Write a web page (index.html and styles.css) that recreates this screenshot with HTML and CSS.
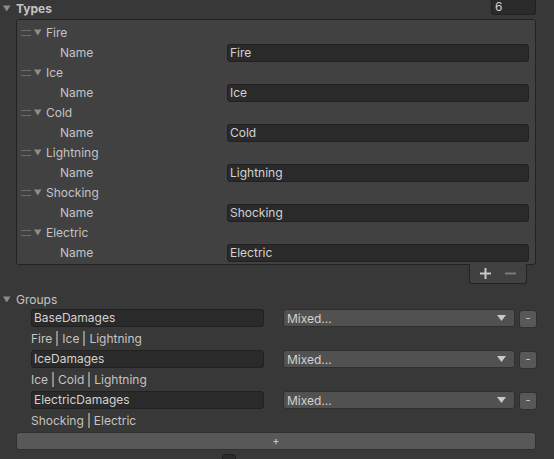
FILE: index.html
```html
<!DOCTYPE html>
<html>
<head>
<meta charset="utf-8">
<link rel="stylesheet" href="styles.css">
</head>
<body>
<div class="inspector">
  <div class="foldout-row">
    <svg class="fold" width="8" height="8" viewBox="0 0 8 8"><path d="M0 1.5h7.5L3.75 7.5z"/></svg>
    <span class="bold">Types</span>
    <div class="count">6</div>
  </div>
  <div class="list">
    <div class="el">
      <div class="el-head"><span class="handle"></span><svg class="fold" width="8" height="8" viewBox="0 0 8 8"><path d="M0 1.5h7.5L3.75 7.5z"/></svg><span>Fire</span></div>
      <div class="el-prop"><span class="prop-label">Name</span><div class="field">Fire</div></div>
    </div>
    <div class="el">
      <div class="el-head"><span class="handle"></span><svg class="fold" width="8" height="8" viewBox="0 0 8 8"><path d="M0 1.5h7.5L3.75 7.5z"/></svg><span>Ice</span></div>
      <div class="el-prop"><span class="prop-label">Name</span><div class="field">Ice</div></div>
    </div>
    <div class="el">
      <div class="el-head"><span class="handle"></span><svg class="fold" width="8" height="8" viewBox="0 0 8 8"><path d="M0 1.5h7.5L3.75 7.5z"/></svg><span>Cold</span></div>
      <div class="el-prop"><span class="prop-label">Name</span><div class="field">Cold</div></div>
    </div>
    <div class="el">
      <div class="el-head"><span class="handle"></span><svg class="fold" width="8" height="8" viewBox="0 0 8 8"><path d="M0 1.5h7.5L3.75 7.5z"/></svg><span>Lightning</span></div>
      <div class="el-prop"><span class="prop-label">Name</span><div class="field">Lightning</div></div>
    </div>
    <div class="el">
      <div class="el-head"><span class="handle"></span><svg class="fold" width="8" height="8" viewBox="0 0 8 8"><path d="M0 1.5h7.5L3.75 7.5z"/></svg><span>Shocking</span></div>
      <div class="el-prop"><span class="prop-label">Name</span><div class="field">Shocking</div></div>
    </div>
    <div class="el">
      <div class="el-head"><span class="handle"></span><svg class="fold" width="8" height="8" viewBox="0 0 8 8"><path d="M0 1.5h7.5L3.75 7.5z"/></svg><span>Electric</span></div>
      <div class="el-prop"><span class="prop-label">Name</span><div class="field">Electric</div></div>
    </div>
  </div>
  <div class="footer-wrap">
    <div class="list-footer">
      <svg class="plus" width="11" height="11" viewBox="0 0 11 11"><path d="M4.5 0h2v4.5H11v2H6.5V11h-2V6.5H0v-2h4.5z"/></svg>
      <svg class="minus" width="11" height="11" viewBox="0 0 11 11"><path d="M0 4.5h11v2H0z"/></svg>
    </div>
  </div>

  <div class="foldout-row groups-head">
    <svg class="fold" width="8" height="8" viewBox="0 0 8 8"><path d="M0 1.5h7.5L3.75 7.5z"/></svg>
    <span>Groups</span>
  </div>

  <div class="group">
    <div class="group-row">
      <div class="field gfield">BaseDamages</div>
      <div class="dropdown"><span>Mixed...</span><svg width="9" height="6" viewBox="0 0 9 6"><path d="M0 0h9L4.5 6z"/></svg></div>
      <div class="small-btn">-</div>
    </div>
    <div class="group-label">Fire<i class="sep"></i>Ice<i class="sep"></i>Lightning</div>
  </div>
  <div class="group">
    <div class="group-row">
      <div class="field gfield">IceDamages</div>
      <div class="dropdown"><span>Mixed...</span><svg width="9" height="6" viewBox="0 0 9 6"><path d="M0 0h9L4.5 6z"/></svg></div>
      <div class="small-btn">-</div>
    </div>
    <div class="group-label">Ice<i class="sep"></i>Cold<i class="sep"></i>Lightning</div>
  </div>
  <div class="group">
    <div class="group-row">
      <div class="field gfield">ElectricDamages</div>
      <div class="dropdown"><span>Mixed...</span><svg width="9" height="6" viewBox="0 0 9 6"><path d="M0 0h9L4.5 6z"/></svg></div>
      <div class="small-btn">-</div>
    </div>
    <div class="group-label">Shocking<i class="sep"></i>Electric</div>
  </div>

  <div class="add-btn">+</div>

  <div class="bottom-row">
    <span class="bottom-label">Separate Colors</span>
    <div class="toggle"></div>
  </div>
</div>
</body>
</html>
```

FILE: styles.css
```css
html, body {
  margin: 0;
  padding: 0;
  background: #383838;
  overflow: hidden;
}
.inspector {
  font-family: Inter, "Noto Sans", sans-serif;
  font-size: 12px;
  color: #c4c4c4;
  width: 554px;
  height: 459px;
  overflow: hidden;
}
.fold {
  fill: #8c8c8c;
  flex: none;
}
.foldout-row {
  display: flex;
  align-items: center;
  height: 16px;
  padding-left: 3px;
  gap: 5px;
}
.bold {
  font-weight: 700;
}
.count {
  margin-left: auto;
  margin-right: 18px;
  width: 45px;
  height: 15px;
  margin-top: -1px;
  background: #2a2a2a;
  border: 1px solid #222;
  border-top: none;
  border-radius: 0 0 3px 3px;
  color: #d2d2d2;
  padding-left: 3px;
  box-sizing: border-box;
  line-height: 14px;
}
.list {
  margin: 3px 18px 0 16px;
  background: #414141;
  border: 1px solid #232323;
  border-radius: 3px;
  padding: 2px 0;
}
.el-head, .el-prop {
  height: 20px;
  display: flex;
  align-items: center;
}
.el-prop {
  padding-top: 1px;
  height: 19px;
}
.el-head {
  padding-left: 4px;
}
.handle {
  width: 10px;
  height: 4px;
  border-top: 1px solid #6c6c6c;
  border-bottom: 1px solid #6c6c6c;
  margin-right: 3px;
  margin-top: 1px;
}
.el-head .fold {
  margin-right: 4px;
}
.prop-label {
  padding-left: 43px;
  width: 167px;
  flex: none;
}
.field {
  background: #2a2a2a;
  border: 1px solid #212121;
  border-radius: 3px;
  height: 18px;
  box-sizing: border-box;
  padding-left: 2px;
  line-height: 16px;
  color: #d2d2d2;
}
.el-prop .field {
  flex: 1;
  margin-right: 6px;
}
.footer-wrap {
  display: flex;
  justify-content: flex-end;
  margin-right: 27px;
  margin-top: -1px;
}
.list-footer {
  width: 58px;
  height: 20px;
  box-sizing: border-box;
  background: #414141;
  border: 1px solid #232323;
  border-top: none;
  border-radius: 0 0 3px 3px;
  display: flex;
  align-items: center;
  gap: 14px;
  padding-left: 10px;
}
.plus { fill: #c8c8c8; }
.minus { fill: #7a7a7a; }
.groups-head {
  margin-top: 6px;
  height: 18px;
}
.group-row {
  height: 20px;
  box-sizing: border-box;
  display: flex;
  align-items: center;
  padding-left: 31px;
}
.gfield {
  width: 233px;
  flex: none;
}
.dropdown {
  margin-left: 19px;
  width: 232px;
  height: 18px;
  box-sizing: border-box;
  background: #515151;
  border: 1px solid #2f2f2f;
  border-radius: 3px;
  display: flex;
  align-items: center;
  justify-content: space-between;
  padding: 0 8px 0 3px;
  color: #d2d2d2;
}
.dropdown svg { fill: #c8c8c8; }
.small-btn {
  margin-left: 4px;
  width: 18px;
  height: 18px;
  margin-top: 1px;
  box-sizing: border-box;
  background: #585858;
  border: 1px solid #2f2f2f;
  border-radius: 3px;
  color: #d0d0d0;
  font-size: 11px;
  text-align: center;
  line-height: 15px;
}
.group-label {
  height: 21px;
  display: flex;
  align-items: center;
  padding-left: 31px;
}
.sep {
  display: inline-block;
  width: 2px;
  height: 15px;
  background: #8a8a8a;
  margin: 0 4px;
}
.add-btn {
  margin: 1px 18px 0 16px;
  height: 18px;
  box-sizing: border-box;
  background: #585858;
  border: 1px solid #2f2f2f;
  border-radius: 3px;
  text-align: center;
  line-height: 16px;
  color: #d0d0d0;
  font-size: 11px;
}
.bottom-row {
  display: flex;
  align-items: flex-start;
  height: 18px;
  padding-left: 16px;
  margin-top: 4px;
}
.bottom-label {
  width: 206px;
  flex: none;
  margin-top: 2px;
}
.toggle {
  width: 14px;
  height: 14px;
  box-sizing: border-box;
  background: #2a2a2a;
  border: 1px solid #212121;
  border-radius: 3px;
  margin-top: 0;
}
```
